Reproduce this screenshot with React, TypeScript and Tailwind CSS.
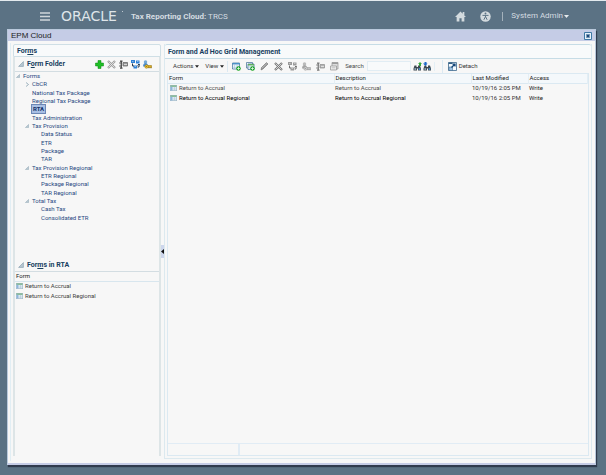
import type { ReactNode } from 'react';

interface TreeNode {
  label: string;
  level: 0 | 1 | 2;
  state?: 'open' | 'closed';
  selected?: boolean;
}

interface FormRow {
  name: string;
  modified: string;
  access: string;
  active: boolean;
}

const TREE: TreeNode[] = [
  { label: 'Forms', level: 0, state: 'open' },
  { label: 'CbCR', level: 1, state: 'closed' },
  { label: 'National Tax Package', level: 1 },
  { label: 'Regional Tax Package', level: 1 },
  { label: 'RTA', level: 1, selected: true },
  { label: 'Tax Administration', level: 1 },
  { label: 'Tax Provision', level: 1, state: 'open' },
  { label: 'Data Status', level: 2 },
  { label: 'ETR', level: 2 },
  { label: 'Package', level: 2 },
  { label: 'TAR', level: 2 },
  { label: 'Tax Provision Regional', level: 1, state: 'open' },
  { label: 'ETR Regional', level: 2 },
  { label: 'Package Regional', level: 2 },
  { label: 'TAR Regional', level: 2 },
  { label: 'Total Tax', level: 1, state: 'open' },
  { label: 'Cash Tax', level: 2 },
  { label: 'Consolidated ETR', level: 2 },
];

const ROWS: FormRow[] = [
  { name: 'Return to Accrual', modified: '10/19/16 2:05 PM', access: 'Write', active: false },
  { name: 'Return to Accrual Regional', modified: '10/19/16 2:05 PM', access: 'Write', active: true },
];

const INDENT = { 0: 'pl-0', 1: 'pl-[9px]', 2: 'pl-[18px]' };

type IconName = 'add' | 'delete' | 'rename' | 'move' | 'assign' | 'newForm' | 'newGrid' | 'edit' | 'layout';

const DRAWINGS: Record<IconName, ReactNode> = {
  add: (
    <path d="M6 1h6v5h5v6h-5v5H6v-5H1V6h5z" fill="#1fbf25" stroke="#0b8711" strokeWidth="1" />
  ),
  delete: (
    <g stroke="#777" fill="none">
      <path d="M2 2l14 14M16 2L2 16" strokeWidth="4.500" />
      <path d="M3 3l12 12M15 3L3 15" stroke="#e9e9e9" strokeWidth="1.600" />
    </g>
  ),
  rename: (
    <g fill="none" stroke="#444" strokeWidth="2.500">
      <path d="M2 2h5M2 16h5M4.500 2v14" />
      <path d="M0 6h5M0 12h5" strokeWidth="1.500" />
      <path d="M8 5h9v7H8z" fill="#999" stroke="#666" strokeWidth="1.500" />
      <path d="M10 9h6" stroke="#fff" strokeWidth="1.200" />
    </g>
  ),
  move: (
    <g>
      <path d="M0 0h8v6H0zM10 1h7v6h-7zM5 11h7v6H5z" fill="#2f80d5" />
      <path d="M2 2h3v1H2zM12 3h3v1h-3zM7 13h3v1H7z" fill="#d5ebff" />
      <path d="M3 7v5h3M13 14h3V9M13 11l3-3 2 3" fill="none" stroke="#26384c" strokeWidth="2" />
    </g>
  ),
  assign: (
    <g>
      <circle cx="5" cy="4" r="3.500" fill="#74a9d7" />
      <path d="M0 13q0-7 5-7t5 7z" fill="#4f8fcd" />
      <path d="M8 11h9v5h-2v-2h-2v2h-2v-2H8" fill="#e8b91d" stroke="#85620b" strokeWidth="1" />
      <circle cx="7" cy="13" r="3.500" fill="#f5c832" stroke="#85620b" />
      <circle cx="6.500" cy="13" r="1" fill="#674b07" />
    </g>
  ),
  newForm: (
    <g>
      <path d="M1 2h14v12H1z" fill="#fff" stroke="#3f6f9a" strokeWidth="1.500" />
      <path d="M1 2h14v3H1z" fill="#4b91c8" />
      <path d="M1 8h14M1 11h14M5 5v9M10 5v9" stroke="#98bcd8" />
      <circle cx="13" cy="13" r="4.500" fill="#18a424" />
      <path d="M10 13h6M13 10v6" stroke="#fff" strokeWidth="1.300" />
    </g>
  ),
  newGrid: (
    <g>
      <path d="M1 1h12v11H1z" fill="#f3f8fb" stroke="#4b7798" strokeWidth="1.500" />
      <path d="M4 4h12v11H4z" fill="#fff" stroke="#3f6f9a" strokeWidth="1.500" />
      <path d="M4 4h12v3H4z" fill="#5fae5d" />
      <path d="M4 10h12M8 7v8M12 7v8" stroke="#98bcd8" />
      <circle cx="13" cy="13" r="4.500" fill="#18a424" />
      <path d="M10 13h6M13 10v6" stroke="#fff" strokeWidth="1.300" />
    </g>
  ),
  edit: (
    <g>
      <path d="M2 16l1-5L13 1l3 3L6 14z" fill="#909090" stroke="#666" strokeWidth="1" />
      <path d="M4 12L14 3" stroke="#ddd" strokeWidth="1" />
    </g>
  ),
  layout: (
    <g>
      <path d="M4 1h12v13H4z" fill="#d3d3d3" stroke="#6d6d6d" strokeWidth="1.500" />
      <path d="M4 1h12v3H4z" fill="#777" />
      <path d="M1 8h12v8H1z" fill="#f3f3f3" stroke="#6d6d6d" strokeWidth="1.500" />
      <path d="M3 11h8M3 14h8" stroke="#888" />
    </g>
  ),
};

const FOLDER_TOOLS: { icon: IconName; title: string; dim?: boolean }[] = [
  { icon: 'add', title: 'Create' },
  { icon: 'delete', title: 'Delete', dim: true },
  { icon: 'rename', title: 'Rename' },
  { icon: 'move', title: 'Move' },
  { icon: 'assign', title: 'Assign Access' },
];

const FORM_TOOLS: { icon: IconName; title: string; dim?: boolean }[] = [
  { icon: 'newForm', title: 'Create form' },
  { icon: 'newGrid', title: 'Create ad hoc grid' },
  { icon: 'edit', title: 'Edit' },
  { icon: 'delete', title: 'Delete' },
  { icon: 'move', title: 'Move', dim: true },
  { icon: 'assign', title: 'Assign access', dim: true },
  { icon: 'rename', title: 'Rename', dim: true },
  { icon: 'layout', title: 'Layout', dim: true },
];

function ToolButton({ icon, title, dim }: { icon: IconName; title: string; dim?: boolean }) {
  return (
    <button type="button" aria-label={title} className="shrink-0">
      <svg viewBox="0 0 18 18" className={dim ? 'size-[9px] opacity-70 grayscale' : 'size-[9px]'}>
        {DRAWINGS[icon]}
      </svg>
    </button>
  );
}

function OpenMark({ className }: { className: string }) {
  return (
    <svg viewBox="0 0 10 10" className={className} aria-hidden="true">
      <path d="M9 1v8H1z" fill="#b8c8d2" stroke="#7f99a9" />
    </svg>
  );
}

function FormIcon() {
  return (
    <svg viewBox="0 0 14 12" className="h-[6px] w-[7px] shrink-0" aria-hidden="true">
      <path d="M.5.5h13v11H.5z" fill="#eef6fb" stroke="#5d809a" />
      <path d="M1 1h12v2.500H1z" fill="#6aab77" />
      <path d="M1 3.500h4V11H1z" fill="#8eb6db" />
      <path d="M5 6h8M5 8.500h8M9 3.500V11" stroke="#a7c0d2" />
    </svg>
  );
}

function Binoculars({ accent, down }: { accent: string; down?: boolean }) {
  return (
    <svg viewBox="0 0 18 18" className="size-[9px]" aria-hidden="true">
      <path d="M3 7h4v3h3V7h4l2 6v4h-6v-4H8v4H1v-4z" fill="#3d4851" />
      <circle cx="4.500" cy="14" r="2" fill="#91a9bb" />
      <circle cx="13" cy="14" r="2" fill="#4a91c7" />
      <path d={down ? 'M3 0h4v3h2L5 8 0 3h3z' : 'M12 8V4h-2l4-4 4 4h-2v4z'} fill={accent} />
    </svg>
  );
}

function TopBar() {
  return (
    <header className="flex h-[29px] shrink-0 items-center border-t border-[#e4eaee] pt-[2px] pr-[37px] pl-[40px] text-[8px] text-[#d5dce1]">
      <button type="button" aria-label="Navigator" className="mr-[11px]">
        <svg viewBox="0 0 10 9" className="h-[9px] w-[10px]">
          <path d="M0 1h10M0 4.500h10M0 8h10" stroke="#d0d6da" strokeWidth="1.700" />
        </svg>
      </button>
      <div className="mr-[8px] flex w-[62px] items-start justify-between font-['DejaVu_Sans',sans-serif] text-[14px] leading-[14px] text-[#dfe5e9]">
        ORACLE
        <span className="mt-[2px] size-px shrink-0 rounded-full bg-[#dfe5e9]" />
      </div>
      <h1 className="pt-[2px]">
        <b>Tax Reporting Cloud:</b> TRCS
      </h1>
      <nav className="ml-auto flex items-center">
        <a href="#home" aria-label="Home" className="mr-[14px]">
          <svg viewBox="0 0 20 20" className="size-[11px]">
            <path d="M0 11L10 1l4 4V2h3v6l3 3h-3v8h-5v-6H8v6H3v-8z" fill="#d3dade" />
          </svg>
        </a>
        <a href="#accessibility" aria-label="Accessibility" className="mr-[11px]">
          <svg viewBox="0 0 20 20" className="size-[11px]">
            <circle cx="10" cy="10" r="9.500" fill="#d3dade" />
            <circle cx="10" cy="4.500" r="1.700" fill="#5b7284" />
            <path d="M4.500 8h11M10 8v3M10 10l-3 6M10 10l3 6" fill="none" stroke="#5b7284" strokeWidth="1.800" />
          </svg>
        </a>
        <span className="mr-[8px] h-[9px] w-px bg-[#a4b1bb]" />
        <button type="button" className="flex items-center gap-px">
          System Admin
          <svg viewBox="0 0 10 6" className="h-[3px] w-[5px]" aria-hidden="true">
            <path d="M0 0h10L5 6z" fill="#e6ebee" />
          </svg>
        </button>
      </nav>
    </header>
  );
}

function FolderTree() {
  return (
    <ul className="grid h-[150px] auto-rows-fr pl-px text-[#27477f]">
      {TREE.map((node) => (
        <li key={node.label} className={`flex items-center ${INDENT[node.level]}`}>
          <span className="flex w-[7px] shrink-0">
            {node.state === 'open' && <OpenMark className="size-[4px]" />}
            {node.state === 'closed' && (
              <svg viewBox="0 0 10 10" className="size-[5px]" aria-hidden="true">
                <path d="M2 1l5 4-5 4" fill="none" stroke="#7f99a9" strokeWidth="1.500" />
              </svg>
            )}
          </span>
          <button
            type="button"
            className={
              node.selected
                ? 'bg-[#a9bfe3] px-px font-bold text-[#102f66] outline outline-[#6c87b5]'
                : undefined
            }
          >
            {node.label}
          </button>
        </li>
      ))}
    </ul>
  );
}

function Sidebar() {
  return (
    <aside className="flex w-[148px] shrink-0 flex-col">
      <h2 className="flex h-[13px] shrink-0 items-center rounded-t-[2px] border border-[#cfdfe6] bg-[#f8fafb] pl-[3px] text-[7px] font-bold text-[#17405f]">
        <span>For<u>m</u>s</span>
      </h2>
      <div className="mb-[3px] flex min-h-0 flex-1 flex-col border-x-2 border-[#dde5e7]">
        <div className="flex h-[15px] shrink-0 items-center border-b border-[#d3dde2] pr-[7px] pl-[3px]">
          <OpenMark className="mr-[3px] size-[6px]" />
          <h3 className="text-[7px] font-bold text-[#17405f]">F<u>o</u>rm Folder</h3>
          <div className="ml-auto flex items-center gap-[3px]">
            {FOLDER_TOOLS.map((tool) => (
              <ToolButton key={tool.title} {...tool} />
            ))}
          </div>
        </div>
        <FolderTree />
        <div className="mt-[36px] flex h-[14px] shrink-0 items-center border-b border-[#d3dde2] pl-[3px]">
          <OpenMark className="mr-[3px] size-[6px]" />
          <h3 className="text-[7px] font-bold text-[#17405f]">For<u>m</u>s in RTA</h3>
        </div>
        <table className="w-full text-left">
          <thead>
            <tr className="h-[9px] border-b border-[#d8e6ee]">
              <th scope="col" className="p-0 pl-px font-normal text-[#222]">Form</th>
            </tr>
          </thead>
          <tbody className="text-[#404040]">
            {ROWS.map((row) => (
              <tr key={row.name} className="h-[10px]">
                <td className="p-0">
                  <div className="flex items-center gap-[2px] pl-px">
                    <FormIcon />
                    {row.name}
                  </div>
                </td>
              </tr>
            ))}
          </tbody>
        </table>
      </div>
    </aside>
  );
}

function Toolbar() {
  return (
    <div className="flex h-[14px] shrink-0 items-center pl-[6px]">
      <button type="button" className="mr-[6px] flex items-center gap-[2px]">
        Actions <Caret />
      </button>
      <button type="button" className="mr-[3px] flex items-center gap-[2px]">
        View <Caret />
      </button>
      <span className="mr-[4px] h-[11px] w-px bg-[#dbe9f2]" />
      <div className="flex items-center gap-[5px]">
        {FORM_TOOLS.map((tool) => (
          <ToolButton key={tool.title} {...tool} />
        ))}
      </div>
      <label htmlFor="search" className="mr-[3px] ml-[6px] text-[#4b4b4b]">Search</label>
      <input id="search" type="text" className="h-[10px] w-[44px] border border-[#e1edf4] bg-[#f8fafb] px-px outline-none" />
      <div className="ml-[2px] flex gap-px">
        <button type="button" aria-label="Find previous">
          <Binoculars accent="#35a83c" />
        </button>
        <button type="button" aria-label="Find next">
          <Binoculars accent="#1d68c9" down />
        </button>
      </div>
      <span className="ml-[2px] h-[9px] w-px bg-[#e4eff5]" />
      <span className="mr-[5px] ml-[7px] h-[13px] w-px bg-[#dbe9f2]" />
      <button type="button" className="flex items-center gap-[2px]">
        <svg viewBox="0 0 18 18" className="size-[9px]" aria-hidden="true">
          <path d="M1 1h16v16H1z" fill="#f5faff" stroke="#346087" strokeWidth="1.500" />
          <path d="M1 1h8v3H1z" fill="#346087" />
          <path d="M2 10h7v7H2z" fill="#9fc2e3" stroke="#346087" />
          <path d="M7 11l6-6M9 4h5v5" fill="none" stroke="#174779" strokeWidth="2.500" />
        </svg>
        Detach
      </button>
    </div>
  );
}

function Caret() {
  return (
    <svg viewBox="0 0 10 6" className="h-[3px] w-[4px]" aria-hidden="true">
      <path d="M0 0h10L5 6z" fill="#222" />
    </svg>
  );
}

function GridManagement() {
  return (
    <main className="flex min-w-0 flex-1 flex-col border-x border-b border-[#dce9ef]">
      <h2 className="flex h-[15px] shrink-0 items-center rounded-t-[2px] border-y border-[#c6dce6] bg-[#f8fafb] pl-[3px] text-[7px] font-bold text-[#17405f]">
        Form and Ad Hoc Grid Management
      </h2>
      <div className="mr-[2px] mb-[2px] ml-[2px] flex min-h-0 flex-1 flex-col">
        <Toolbar />
        <div className="flex min-h-0 flex-1 flex-col border border-[#dbe9f2]">
          <table className="w-full table-fixed text-left">
            <colgroup>
              <col className="w-[166px]" />
              <col className="w-[137px]" />
              <col className="w-[57px]" />
              <col />
            </colgroup>
            <thead>
              <tr className="h-[9px] border-b border-[#dbe9f2] bg-[#f4f8fb] text-[#222]">
                {['Form', 'Description', 'Last Modified', 'Access'].map((title) => (
                  <th key={title} scope="col" className="border-r border-[#e4eef4] p-0 pl-px font-normal">
                    {title}
                  </th>
                ))}
              </tr>
            </thead>
            <tbody>
              {ROWS.map((row) => (
                <tr key={row.name} className={row.active ? 'h-[10px] text-black' : 'h-[10px] text-[#4b4b4b]'}>
                  <td className="p-0">
                    <div className="flex items-center gap-[2px] pl-[2px]">
                      <FormIcon />
                      {row.name}
                    </div>
                  </td>
                  <td className="p-0 pl-px">{row.name}</td>
                  <td className="p-0 pl-px text-[#333]">{row.modified}</td>
                  <td className="p-0 pl-px text-[#222]">{row.access}</td>
                </tr>
              ))}
            </tbody>
          </table>
          <div className="mt-auto flex h-[12px] shrink-0 border-t border-[#e1ecf5]">
            <span className="w-[72px] border-r-2 border-[#e1ecf5]" />
          </div>
        </div>
      </div>
    </main>
  );
}

export default function App() {
  return (
    <div className="flex h-screen flex-col overflow-hidden bg-[#5b7284] pb-[10px] font-['Roboto',sans-serif] text-[6px] leading-[8px] text-[#333]">
      <TopBar />
      <div className="mr-[10px] ml-[7px] flex min-h-0 flex-1 flex-col border-x border-t border-b-2 border-[#b9c9dc] border-b-[#c5cce6] bg-[#f7f7f7] shadow-[1px_2px_1px_#303b4e]">
        <div className="flex h-[11px] shrink-0 items-center justify-between bg-[#c5cce6] pr-[3px] pl-[3px]">
          <span className="font-['Liberation_Sans',Arial,sans-serif] text-[8px] text-[#222]">EPM Cloud</span>
          <button type="button" aria-label="Close">
            <svg viewBox="0 0 16 16" className="size-[8px]">
              <path d="M1 1h14v14H1z" fill="#e6f2fb" stroke="#3f78a5" strokeWidth="2" />
              <path d="M5 5l6 6M11 5l-6 6" stroke="#174779" strokeWidth="3" />
            </svg>
          </button>
        </div>
        <div className="m-[2px] mr-[3px] flex min-h-0 flex-1 border-l border-[#e1eef4] pt-px pb-[2px] pl-[2px]">
          <Sidebar />
          <div className="flex w-[3px] shrink-0 flex-col">
            <button type="button" aria-label="Collapse pane" className="mt-[201px] flex h-[13px] w-[3px] items-center justify-center bg-[#cdd6ec]">
              <svg viewBox="0 0 6 10" className="h-[5px] w-[3px]">
                <path d="M6 0v10L0 5z" fill="#111" />
              </svg>
            </button>
          </div>
          <GridManagement />
        </div>
      </div>
    </div>
  );
}
